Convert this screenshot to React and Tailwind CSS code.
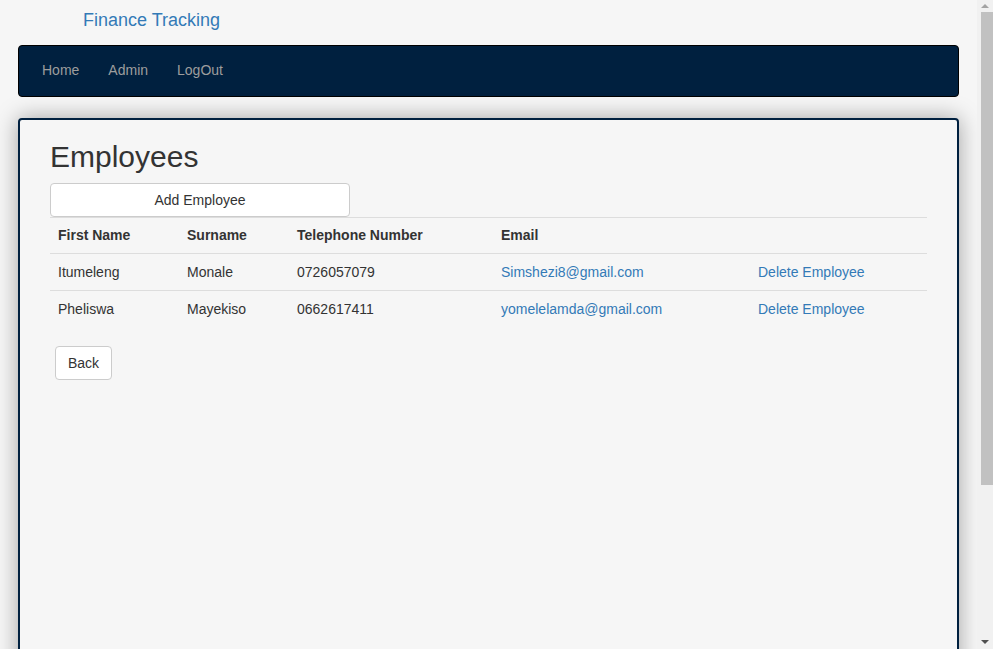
import React from 'react';

const employees = [
  { first: 'Itumeleng', last: 'Monale', phone: '0726057079', email: 'Simshezi8@gmail.com' },
  { first: 'Pheliswa', last: 'Mayekiso', phone: '0662617411', email: 'yomelelamda@gmail.com' },
];

function Scrollbar() {
  // page scrollbar of the screenshot, fixed to the viewport edge
  return (
    <div className="fixed right-0 top-0 flex h-screen w-[16px] flex-col items-center bg-[#f1f1f1]">
      <div className="flex h-[12px] w-full items-center justify-center">
        <div className="h-0 w-0 border-x-[4px] border-b-[4px] border-x-transparent border-b-[#a3a3a3]" />
      </div>
      <div className="ml-[3px] h-[473px] w-[12px] bg-[#c1c1c1]" />
      <div className="flex-1" />
      <div className="flex h-[14px] w-full items-center justify-center">
        <div className="h-0 w-0 border-x-[4px] border-t-[4px] border-x-transparent border-t-[#505050]" />
      </div>
    </div>
  );
}

export default function App() {
  return (
    <div className="min-h-screen bg-[#f6f6f6] font-['Liberation_Sans',Arial,sans-serif] text-[14px] leading-5 text-[#333]">
      <div className="mr-[16px] pb-5">
        <div className="h-[45px] pl-[83px] pt-[9px]">
          <a className="text-[18px] leading-[22px] text-[#337ab7]">Finance Tracking</a>
        </div>

        <nav className="mx-[18px] flex h-[52px] items-center rounded border border-black bg-[#00203f] pb-[2px] pl-[23px]">
          <a className="text-[#9d9d9d]">Home</a>
          <a className="ml-[29px] text-[#9d9d9d]">Admin</a>
          <a className="ml-[29px] text-[#9d9d9d]">LogOut</a>
        </nav>

        <main className="mx-[18px] mt-[21px] h-[712px] rounded border-2 border-[#00203f] bg-[#f6f6f6] pl-[30px] pr-[30px] pt-[20px] shadow-[0_0_22px_rgba(0,0,0,0.35)]">
          <h2 className="text-[30px] leading-[33px]">Employees</h2>
          <button
            type="button"
            className="mt-[10px] h-[34px] w-[300px] rounded border border-[#ccc] bg-white text-[#333]"
          >
            Add Employee
          </button>

          <table className="w-full border-collapse">
            <thead>
              <tr className="border-t border-[#ddd]">
                <th className="w-[129px] border-b border-[#ddd] px-2 pb-2 pt-[7px] text-left font-bold">First Name</th>
                <th className="w-[110px] border-b border-[#ddd] px-2 pb-2 pt-[7px] text-left font-bold">Surname</th>
                <th className="w-[204px] border-b border-[#ddd] px-2 pb-2 pt-[7px] text-left font-bold">Telephone Number</th>
                <th className="w-[257px] border-b border-[#ddd] px-2 pb-2 pt-[7px] text-left font-bold">Email</th>
                <th className="border-b border-[#ddd] px-2 pb-2 pt-[7px]"></th>
              </tr>
            </thead>
            <tbody>
              {employees.map((e, i) => (
                <tr key={e.phone} className={i > 0 ? 'border-t border-[#ddd]' : ''}>
                  <td className="px-2 py-2">{e.first}</td>
                  <td className="px-2 py-2">{e.last}</td>
                  <td className="px-2 py-2">{e.phone}</td>
                  <td className="px-2 py-2 text-[#337ab7]">{e.email}</td>
                  <td className="px-2 py-2 text-[#337ab7]">Delete Employee</td>
                </tr>
              ))}
            </tbody>
          </table>

          <button
            type="button"
            className="ml-[5px] mt-[19px] h-[34px] rounded border border-[#ccc] bg-white px-3 text-[#333]"
          >
            Back
          </button>
        </main>
      </div>
      <Scrollbar />
    </div>
  );
}
